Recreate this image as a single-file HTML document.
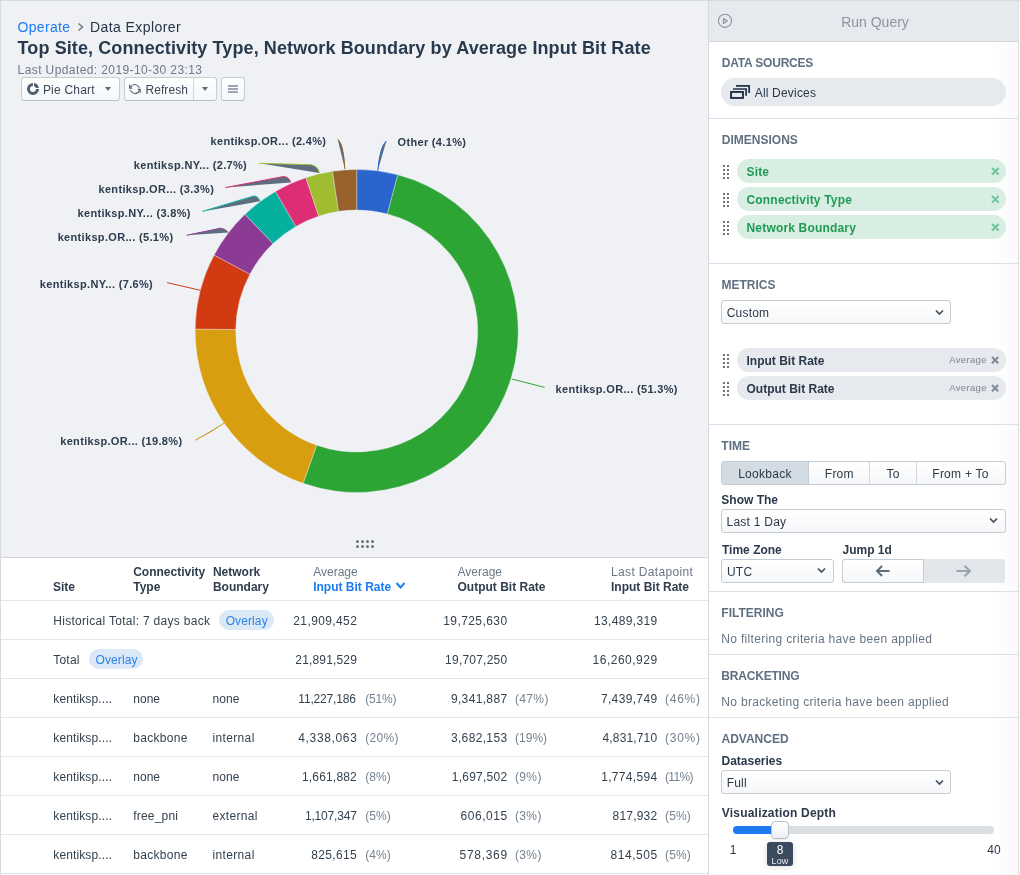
<!DOCTYPE html>
<html><head><meta charset="utf-8"><title>Data Explorer</title>
<style>
html,body{margin:0;padding:0}
body{width:1020px;height:875px;overflow:hidden;position:relative;background:#eff1f5;font-family:"Liberation Sans", sans-serif;-webkit-font-smoothing:antialiased;will-change:transform}
.t{position:absolute;white-space:nowrap}
.b{position:absolute}
svg text{font-family:"Liberation Sans", sans-serif}
</style></head><body>
<div class="b" style="left:0px;top:0px;width:1020px;height:1px;background:#d7dadf"></div>
<div class="b" style="left:0px;top:0px;width:1px;height:875px;background:#d7dadf"></div>
<div class="t" style="top:19.95px;font-size:14px;line-height:14px;font-weight:400;color:#1d7cf2;letter-spacing:0.3px;left:17.60px;">Operate</div>
<svg class="b" style="left:76px;top:21px" width="10" height="12"><polyline points="2.5,2.5 6.5,6 2.5,9.5" fill="none" stroke="#6b7886" stroke-width="1.5"/></svg>
<div class="t" style="top:19.95px;font-size:14px;line-height:14px;font-weight:400;color:#26364a;letter-spacing:0.42px;left:90.00px;">Data Explorer</div>
<div class="t" style="top:38.56px;font-size:18px;line-height:18px;font-weight:700;color:#283a4e;letter-spacing:0.1px;left:17.60px;">Top Site, Connectivity Type, Network Boundary by Average Input Bit Rate</div>
<div class="t" style="top:63.74px;font-size:12px;line-height:12px;font-weight:400;color:#6c7a89;letter-spacing:0.4px;left:17.60px;">Last Updated: 2019-10-30 23:13</div>
<div class="b" style="left:21px;top:77px;width:99px;height:24px;border:1px solid #c8cdd4;border-bottom-color:#b9bfc7;border-radius:3px;background:linear-gradient(#ffffff,#f4f6f8);box-sizing:border-box;"></div>
<svg class="b" style="left:26px;top:82px" width="14" height="14" viewBox="0 0 14 14"><path d="M7 1 A6 6 0 1 0 13 7 L10 7 A3 3 0 1 1 7 4 Z" fill="#506072"/><path d="M8 1.1 A6 6 0 0 1 12.9 6 L10 6 A3 3 0 0 0 8 4.2 Z" fill="#506072"/></svg>
<div class="t" style="top:83.64px;font-size:12px;line-height:12px;font-weight:400;color:#3a4858;letter-spacing:0.22px;left:42.90px;">Pie Chart</div>
<svg class="b" style="left:104px;top:86px" width="8" height="6"><polygon points="1,1 7,1 4,5" fill="#5d6a78"/></svg>
<div class="b" style="left:124px;top:77px;width:93px;height:24px;border:1px solid #c8cdd4;border-bottom-color:#b9bfc7;border-radius:3px;background:linear-gradient(#ffffff,#f4f6f8);box-sizing:border-box;"></div>
<div class="b" style="left:193px;top:78px;width:1px;height:22px;background:#d3d7dd"></div>
<svg class="b" style="left:127px;top:81px" width="16" height="16"><path d="M3.3 6 Q8 0.8 12.6 6.6" fill="none" stroke="#5c6a79" stroke-width="1.15"/><path d="M3 9 Q7.6 15.6 12.6 10" fill="none" stroke="#5c6a79" stroke-width="1.15"/><path d="M2 2.8 L2 7.8 L5.5 7.8 Z" fill="#5c6a79"/><path d="M13.8 7.8 L13.8 12.6 L10.3 7.8 Z" fill="#5c6a79"/></svg>
<div class="t" style="top:83.64px;font-size:12px;line-height:12px;font-weight:400;color:#3a4858;letter-spacing:0.1px;left:145.40px;">Refresh</div>
<svg class="b" style="left:201px;top:86px" width="8" height="6"><polygon points="1,1 7,1 4,5" fill="#5d6a78"/></svg>
<div class="b" style="left:221px;top:77px;width:24px;height:24px;border:1px solid #c8cdd4;border-bottom-color:#b9bfc7;border-radius:3px;background:linear-gradient(#ffffff,#f4f6f8);box-sizing:border-box;"></div>
<div class="b" style="left:228px;top:85px;width:10px;height:2px;background:#9ba6b2"></div>
<div class="b" style="left:228px;top:88px;width:10px;height:2px;background:#9ba6b2"></div>
<div class="b" style="left:228px;top:91px;width:10px;height:2px;background:#9ba6b2"></div>
<svg class="b" style="left:0;top:0" width="708" height="557"><path d="M356.70 169.50 A161.5 161.5 0 0 1 397.77 174.81 L387.47 213.98 A121.0 121.0 0 0 0 356.70 210.00 Z" fill="#2965cc" stroke="#eff1f5" stroke-width="0.35" stroke-linejoin="round"/><path d="M397.77 174.81 A161.5 161.5 0 1 1 303.16 483.37 L316.59 445.16 A121.0 121.0 0 1 0 387.47 213.98 Z" fill="#2ca535" stroke="#eff1f5" stroke-width="0.35" stroke-linejoin="round"/><path d="M303.16 483.37 A161.5 161.5 0 0 1 195.21 329.03 L235.71 329.52 A121.0 121.0 0 0 0 316.59 445.16 Z" fill="#d99e10" stroke="#eff1f5" stroke-width="0.35" stroke-linejoin="round"/><path d="M195.21 329.03 A161.5 161.5 0 0 1 214.14 255.11 L249.89 274.14 A121.0 121.0 0 0 0 235.71 329.52 Z" fill="#d23a12" stroke="#eff1f5" stroke-width="0.35" stroke-linejoin="round"/><path d="M214.14 255.11 A161.5 161.5 0 0 1 245.00 214.36 L273.01 243.61 A121.0 121.0 0 0 0 249.89 274.14 Z" fill="#8b3b93" stroke="#eff1f5" stroke-width="0.35" stroke-linejoin="round"/><path d="M245.00 214.36 A161.5 161.5 0 0 1 275.50 191.40 L295.86 226.41 A121.0 121.0 0 0 0 273.01 243.61 Z" fill="#06b09e" stroke="#eff1f5" stroke-width="0.35" stroke-linejoin="round"/><path d="M275.50 191.40 A161.5 161.5 0 0 1 305.92 177.69 L318.65 216.14 A121.0 121.0 0 0 0 295.86 226.41 Z" fill="#dd2d74" stroke="#eff1f5" stroke-width="0.35" stroke-linejoin="round"/><path d="M305.92 177.69 A161.5 161.5 0 0 1 332.48 171.33 L338.56 211.37 A121.0 121.0 0 0 0 318.65 216.14 Z" fill="#a0bd31" stroke="#eff1f5" stroke-width="0.35" stroke-linejoin="round"/><path d="M332.48 171.33 A161.5 161.5 0 0 1 356.70 169.50 L356.70 210.00 A121.0 121.0 0 0 0 338.56 211.37 Z" fill="#97622c" stroke="#eff1f5" stroke-width="0.35" stroke-linejoin="round"/><path d="M337.7 139.3 Q343.5 143 344.9 169" fill="#5d6d7e" stroke="#97622c" stroke-width="1"/><path d="M386.4 141 Q380 146 377.8 170.5" fill="#5d6d7e" stroke="#2965cc" stroke-width="1"/><path d="M259.4 163.3 L311 164.7 Q318 166 319.4 172.9" fill="#5d6d7e" stroke="#a0bd31" stroke-width="1"/><path d="M225.3 187.6 L283.5 176.5 Q289 177 290.6 182.4" fill="#5d6d7e" stroke="#dd2d74" stroke-width="1"/><path d="M202.4 211.4 L254.1 195.9 Q258 196 260 201.2" fill="#5d6d7e" stroke="#12b2a0" stroke-width="1"/><path d="M186.5 235.3 L220.6 228.2 Q225 228.5 228.2 232.4" fill="#5d6d7e" stroke="#8b3b93" stroke-width="1"/><path d="M167.1 282.6 L200.3 290.3" fill="#5d6d7e" stroke="#d23a12" stroke-width="1"/><path d="M195 440.3 Q210 433 224.1 423.2" fill="#5d6d7e" stroke="#d99e10" stroke-width="1"/><path d="M511.8 379 L544.7 387.4" fill="#5d6d7e" stroke="#2ca535" stroke-width="1"/><text x="326.3" y="145.4" text-anchor="end" font-size="11" font-weight="700" fill="#2d3c4e" letter-spacing="0.33">kentiksp.OR... (2.4%)</text><text x="397.5" y="145.9" text-anchor="start" font-size="11" font-weight="700" fill="#2d3c4e" letter-spacing="0.33">Other (4.1%)</text><text x="247.1" y="169.2" text-anchor="end" font-size="11" font-weight="700" fill="#2d3c4e" letter-spacing="0.33">kentiksp.NY... (2.7%)</text><text x="214.2" y="193.3" text-anchor="end" font-size="11" font-weight="700" fill="#2d3c4e" letter-spacing="0.33">kentiksp.OR... (3.3%)</text><text x="190.8" y="217.2" text-anchor="end" font-size="11" font-weight="700" fill="#2d3c4e" letter-spacing="0.33">kentiksp.NY... (3.8%)</text><text x="173.4" y="241.1" text-anchor="end" font-size="11" font-weight="700" fill="#2d3c4e" letter-spacing="0.33">kentiksp.OR... (5.1%)</text><text x="153.1" y="288.0" text-anchor="end" font-size="11" font-weight="700" fill="#2d3c4e" letter-spacing="0.33">kentiksp.NY... (7.6%)</text><text x="182.4" y="445.1" text-anchor="end" font-size="11" font-weight="700" fill="#2d3c4e" letter-spacing="0.33">kentiksp.OR... (19.8%)</text><text x="555.6" y="392.9" text-anchor="start" font-size="11" font-weight="700" fill="#2d3c4e" letter-spacing="0.33">kentiksp.OR... (51.3%)</text><circle cx="357.5" cy="541.5" r="1.5" fill="#707478"/><circle cx="357.5" cy="546.5" r="1.5" fill="#707478"/><circle cx="362.5" cy="541.5" r="1.5" fill="#707478"/><circle cx="362.5" cy="546.5" r="1.5" fill="#707478"/><circle cx="367.5" cy="541.5" r="1.5" fill="#707478"/><circle cx="367.5" cy="546.5" r="1.5" fill="#707478"/><circle cx="372.5" cy="541.5" r="1.5" fill="#707478"/><circle cx="372.5" cy="546.5" r="1.5" fill="#707478"/></svg>
<div class="b" style="left:1px;top:557px;width:707px;height:1px;background:#d3d6db"></div>
<div class="b" style="left:1px;top:558px;width:707px;height:317px;background:#ffffff"></div>
<div class="b" style="left:1px;top:600px;width:707px;height:1px;background:#e2e5e9"></div>
<div class="b" style="left:1px;top:639px;width:707px;height:1px;background:#e2e5e9"></div>
<div class="b" style="left:1px;top:678px;width:707px;height:1px;background:#e2e5e9"></div>
<div class="b" style="left:1px;top:717px;width:707px;height:1px;background:#e2e5e9"></div>
<div class="b" style="left:1px;top:756px;width:707px;height:1px;background:#e2e5e9"></div>
<div class="b" style="left:1px;top:795px;width:707px;height:1px;background:#e2e5e9"></div>
<div class="b" style="left:1px;top:834px;width:707px;height:1px;background:#e2e5e9"></div>
<div class="b" style="left:1px;top:873px;width:707px;height:1px;background:#e2e5e9"></div>
<div class="t" style="top:580.84px;font-size:12px;line-height:12px;font-weight:700;color:#2f3e4f;left:53.00px;">Site</div>
<div class="t" style="top:566.04px;font-size:12px;line-height:12px;font-weight:700;color:#2f3e4f;left:133.20px;">Connectivity</div>
<div class="t" style="top:580.84px;font-size:12px;line-height:12px;font-weight:700;color:#2f3e4f;left:133.20px;">Type</div>
<div class="t" style="top:566.04px;font-size:12px;line-height:12px;font-weight:700;color:#2f3e4f;left:212.90px;">Network</div>
<div class="t" style="top:580.84px;font-size:12px;line-height:12px;font-weight:700;color:#2f3e4f;left:212.90px;">Boundary</div>
<div class="t" style="top:566.04px;font-size:12px;line-height:12px;font-weight:400;color:#6b7785;left:313.20px;">Average</div>
<div class="t" style="top:580.84px;font-size:12px;line-height:12px;font-weight:700;color:#1d7cf2;left:313.20px;">Input Bit Rate</div>
<svg class="b" style="left:395px;top:581px" width="12" height="9"><polyline points="1.5,2 5.5,6.5 9.5,2" fill="none" stroke="#1d7cf2" stroke-width="2"/></svg>
<div class="t" style="top:566.04px;font-size:12px;line-height:12px;font-weight:400;color:#6b7785;left:457.50px;">Average</div>
<div class="t" style="top:580.84px;font-size:12px;line-height:12px;font-weight:700;color:#2f3e4f;left:457.50px;">Output Bit Rate</div>
<div class="t" style="top:566.04px;font-size:12px;line-height:12px;font-weight:400;color:#6b7785;letter-spacing:0.35px;left:611.00px;">Last Datapoint</div>
<div class="t" style="top:580.84px;font-size:12px;line-height:12px;font-weight:700;color:#2f3e4f;left:611.00px;">Input Bit Rate</div>
<div class="t" style="top:614.74px;font-size:12px;line-height:12px;font-weight:400;color:#34424f;letter-spacing:0.29px;left:53.30px;">Historical Total: 7 days back</div>
<div class="t" style="top:614.74px;font-size:12px;line-height:12px;font-weight:400;color:#34424f;letter-spacing:0.384px;left:293.30px;">21,909,452</div>
<div class="t" style="top:614.74px;font-size:12px;line-height:12px;font-weight:400;color:#34424f;letter-spacing:0.428px;left:443.20px;">19,725,630</div>
<div class="t" style="top:614.74px;font-size:12px;line-height:12px;font-weight:400;color:#34424f;letter-spacing:0.328px;left:594.10px;">13,489,319</div>
<div class="t" style="top:653.74px;font-size:12px;line-height:12px;font-weight:400;color:#34424f;letter-spacing:0.2px;left:53.30px;">Total</div>
<div class="t" style="top:653.74px;font-size:12px;line-height:12px;font-weight:400;color:#34424f;letter-spacing:0.161px;left:295.30px;">21,891,529</div>
<div class="t" style="top:653.74px;font-size:12px;line-height:12px;font-weight:400;color:#34424f;letter-spacing:0.217px;left:445.10px;">19,707,250</div>
<div class="t" style="top:653.74px;font-size:12px;line-height:12px;font-weight:400;color:#34424f;letter-spacing:0.495px;left:592.60px;">16,260,929</div>
<div class="t" style="top:692.74px;font-size:12px;line-height:12px;font-weight:400;color:#34424f;letter-spacing:0.12px;left:53.30px;">kentiksp....</div>
<div class="t" style="top:692.74px;font-size:12px;line-height:12px;font-weight:400;color:#34424f;letter-spacing:0.05px;left:133.20px;">none</div>
<div class="t" style="top:692.74px;font-size:12px;line-height:12px;font-weight:400;color:#34424f;letter-spacing:0.05px;left:212.50px;">none</div>
<div class="t" style="top:692.74px;font-size:12px;line-height:12px;font-weight:400;color:#34424f;letter-spacing:-0.172px;left:298.30px;">11,227,186</div>
<div class="t" style="top:692.74px;font-size:12px;line-height:12px;font-weight:400;color:#75828f;letter-spacing:-0.201px;left:365.20px;">(51%)</div>
<div class="t" style="top:692.74px;font-size:12px;line-height:12px;font-weight:400;color:#34424f;letter-spacing:0.353px;left:450.90px;">9,341,887</div>
<div class="t" style="top:692.74px;font-size:12px;line-height:12px;font-weight:400;color:#75828f;letter-spacing:0.374px;left:514.90px;">(47%)</div>
<div class="t" style="top:692.74px;font-size:12px;line-height:12px;font-weight:400;color:#34424f;letter-spacing:0.353px;left:600.90px;">7,439,749</div>
<div class="t" style="top:692.74px;font-size:12px;line-height:12px;font-weight:400;color:#75828f;letter-spacing:0.749px;left:665.00px;">(46%)</div>
<div class="t" style="top:731.74px;font-size:12px;line-height:12px;font-weight:400;color:#34424f;letter-spacing:0.12px;left:53.30px;">kentiksp....</div>
<div class="t" style="top:731.74px;font-size:12px;line-height:12px;font-weight:400;color:#34424f;letter-spacing:0.3px;left:133.20px;">backbone</div>
<div class="t" style="top:731.74px;font-size:12px;line-height:12px;font-weight:400;color:#34424f;letter-spacing:0.35px;left:212.50px;">internal</div>
<div class="t" style="top:731.74px;font-size:12px;line-height:12px;font-weight:400;color:#34424f;letter-spacing:0.64px;left:298.30px;">4,338,063</div>
<div class="t" style="top:731.74px;font-size:12px;line-height:12px;font-weight:400;color:#75828f;letter-spacing:0.299px;left:365.20px;">(20%)</div>
<div class="t" style="top:731.74px;font-size:12px;line-height:12px;font-weight:400;color:#34424f;letter-spacing:0.353px;left:450.90px;">3,682,153</div>
<div class="t" style="top:731.74px;font-size:12px;line-height:12px;font-weight:400;color:#75828f;letter-spacing:0.049px;left:514.90px;">(19%)</div>
<div class="t" style="top:731.74px;font-size:12px;line-height:12px;font-weight:400;color:#34424f;letter-spacing:0.153px;left:602.50px;">4,831,710</div>
<div class="t" style="top:731.74px;font-size:12px;line-height:12px;font-weight:400;color:#75828f;letter-spacing:0.749px;left:665.00px;">(30%)</div>
<div class="t" style="top:770.74px;font-size:12px;line-height:12px;font-weight:400;color:#34424f;letter-spacing:0.12px;left:53.30px;">kentiksp....</div>
<div class="t" style="top:770.74px;font-size:12px;line-height:12px;font-weight:400;color:#34424f;letter-spacing:0.05px;left:133.20px;">none</div>
<div class="t" style="top:770.74px;font-size:12px;line-height:12px;font-weight:400;color:#34424f;letter-spacing:0.05px;left:212.50px;">none</div>
<div class="t" style="top:770.74px;font-size:12px;line-height:12px;font-weight:400;color:#34424f;letter-spacing:0.19px;left:301.90px;">1,661,882</div>
<div class="t" style="top:770.74px;font-size:12px;line-height:12px;font-weight:400;color:#75828f;letter-spacing:0.089px;left:365.20px;">(8%)</div>
<div class="t" style="top:770.74px;font-size:12px;line-height:12px;font-weight:400;color:#34424f;letter-spacing:0.24px;left:451.80px;">1,697,502</div>
<div class="t" style="top:770.74px;font-size:12px;line-height:12px;font-weight:400;color:#75828f;letter-spacing:0.389px;left:514.90px;">(9%)</div>
<div class="t" style="top:770.74px;font-size:12px;line-height:12px;font-weight:400;color:#34424f;letter-spacing:0.315px;left:601.20px;">1,774,594</div>
<div class="t" style="top:770.74px;font-size:12px;line-height:12px;font-weight:400;color:#75828f;letter-spacing:-0.651px;left:665.00px;">(11%)</div>
<div class="t" style="top:809.74px;font-size:12px;line-height:12px;font-weight:400;color:#34424f;letter-spacing:0.12px;left:53.30px;">kentiksp....</div>
<div class="t" style="top:809.74px;font-size:12px;line-height:12px;font-weight:400;color:#34424f;letter-spacing:0.2px;left:133.20px;">free_pni</div>
<div class="t" style="top:809.74px;font-size:12px;line-height:12px;font-weight:400;color:#34424f;letter-spacing:0.3px;left:212.50px;">external</div>
<div class="t" style="top:809.74px;font-size:12px;line-height:12px;font-weight:400;color:#34424f;letter-spacing:-0.197px;left:305.00px;">1,107,347</div>
<div class="t" style="top:809.74px;font-size:12px;line-height:12px;font-weight:400;color:#75828f;letter-spacing:0.089px;left:365.20px;">(5%)</div>
<div class="t" style="top:809.74px;font-size:12px;line-height:12px;font-weight:400;color:#34424f;letter-spacing:0.539px;left:460.50px;">606,015</div>
<div class="t" style="top:809.74px;font-size:12px;line-height:12px;font-weight:400;color:#75828f;letter-spacing:0.389px;left:514.90px;">(3%)</div>
<div class="t" style="top:809.74px;font-size:12px;line-height:12px;font-weight:400;color:#34424f;letter-spacing:0.189px;left:612.60px;">817,932</div>
<div class="t" style="top:809.74px;font-size:12px;line-height:12px;font-weight:400;color:#75828f;letter-spacing:0.156px;left:665.00px;">(5%)</div>
<div class="t" style="top:848.74px;font-size:12px;line-height:12px;font-weight:400;color:#34424f;letter-spacing:0.12px;left:53.30px;">kentiksp....</div>
<div class="t" style="top:848.74px;font-size:12px;line-height:12px;font-weight:400;color:#34424f;letter-spacing:0.3px;left:133.20px;">backbone</div>
<div class="t" style="top:848.74px;font-size:12px;line-height:12px;font-weight:400;color:#34424f;letter-spacing:0.35px;left:212.50px;">internal</div>
<div class="t" style="top:848.74px;font-size:12px;line-height:12px;font-weight:400;color:#34424f;letter-spacing:0.372px;left:311.20px;">825,615</div>
<div class="t" style="top:848.74px;font-size:12px;line-height:12px;font-weight:400;color:#75828f;letter-spacing:0.089px;left:365.20px;">(4%)</div>
<div class="t" style="top:848.74px;font-size:12px;line-height:12px;font-weight:400;color:#34424f;letter-spacing:0.705px;left:459.50px;">578,369</div>
<div class="t" style="top:848.74px;font-size:12px;line-height:12px;font-weight:400;color:#75828f;letter-spacing:0.389px;left:514.90px;">(3%)</div>
<div class="t" style="top:848.74px;font-size:12px;line-height:12px;font-weight:400;color:#34424f;letter-spacing:0.539px;left:610.50px;">814,505</div>
<div class="t" style="top:848.74px;font-size:12px;line-height:12px;font-weight:400;color:#75828f;letter-spacing:0.156px;left:665.00px;">(5%)</div>
<div class="b" style="left:219px;top:610px;width:55px;height:20px;background:#dbe8f6;border-radius:10px"></div>
<div class="t" style="top:614.74px;font-size:12px;line-height:12px;font-weight:400;color:#2d82ea;letter-spacing:0.1px;left:225.70px;">Overlay</div>
<div class="b" style="left:89px;top:649px;width:54px;height:20px;background:#dbe8f6;border-radius:10px"></div>
<div class="t" style="top:653.74px;font-size:12px;line-height:12px;font-weight:400;color:#2d82ea;letter-spacing:0.1px;left:95.50px;">Overlay</div>
<div class="b" style="left:708px;top:1px;width:1px;height:874px;background:#d5d8dc"></div>
<div class="b" style="left:709px;top:1px;width:309px;height:874px;background:#ffffff"></div>
<div class="b" style="left:995px;top:42px;width:23px;height:833px;background:linear-gradient(90deg,rgba(0,0,0,0),rgba(0,0,0,0.025))"></div>
<div class="b" style="left:1018px;top:1px;width:1px;height:874px;background:#dfe2e5"></div>
<div class="b" style="left:1019px;top:1px;width:1px;height:874px;background:#f7f8f9"></div>
<div class="b" style="left:709px;top:1px;width:309px;height:40px;background:#e6e9ed"></div>
<div class="b" style="left:709px;top:41px;width:309px;height:1px;background:#d3d7dc"></div>
<svg class="b" style="left:716px;top:12px" width="18" height="18"><circle cx="9" cy="8.8" r="6.6" fill="none" stroke="#8893a0" stroke-width="1.1"/><polygon points="7.5,6.5 11.3,9 7.5,11.5" fill="none" stroke="#8893a0" stroke-width="1.1" stroke-linejoin="round"/></svg>
<div class="t" style="top:14.85px;font-size:14px;line-height:14px;font-weight:400;color:#8a95a2;left:575.00px;width:600px;text-align:center;">Run Query</div>
<div class="b" style="left:709px;top:118px;width:309px;height:1px;background:#dde1e5"></div>
<div class="b" style="left:709px;top:263px;width:309px;height:1px;background:#dde1e5"></div>
<div class="b" style="left:709px;top:424px;width:309px;height:1px;background:#dde1e5"></div>
<div class="b" style="left:709px;top:591px;width:309px;height:1px;background:#dde1e5"></div>
<div class="b" style="left:709px;top:654px;width:309px;height:1px;background:#dde1e5"></div>
<div class="b" style="left:709px;top:717px;width:309px;height:1px;background:#dde1e5"></div>
<div class="t" style="top:56.84px;font-size:12px;line-height:12px;font-weight:700;color:#607082;letter-spacing:-0.2px;left:721.80px;">DATA SOURCES</div>
<div class="b" style="left:721px;top:78px;width:285px;height:28px;background:#e6e9ed;border-radius:14px"></div>
<svg class="b" style="left:729px;top:84px" width="23" height="16"><rect x="2.05" y="7.95" width="11.9" height="6" fill="none" stroke="#1f2f44" stroke-width="1.9"/><polyline points="4,5 17.1,5 17.1,11.8" fill="none" stroke="#1f2f44" stroke-width="1.7"/><polyline points="7,1.9 20.15,1.9 20.15,8.9" fill="none" stroke="#1f2f44" stroke-width="1.7"/></svg>
<div class="t" style="top:86.84px;font-size:12px;line-height:12px;font-weight:400;color:#2b3a4b;letter-spacing:0.19px;left:754.70px;">All Devices</div>
<div class="t" style="top:133.64px;font-size:12px;line-height:12px;font-weight:700;color:#607082;left:721.80px;">DIMENSIONS</div>
<div class="b" style="left:723px;top:165px;width:2px;height:2px;background:#66737f"></div><div class="b" style="left:723px;top:169px;width:2px;height:2px;background:#66737f"></div><div class="b" style="left:723px;top:173px;width:2px;height:2px;background:#66737f"></div><div class="b" style="left:723px;top:177px;width:2px;height:2px;background:#66737f"></div><div class="b" style="left:727px;top:165px;width:2px;height:2px;background:#66737f"></div><div class="b" style="left:727px;top:169px;width:2px;height:2px;background:#66737f"></div><div class="b" style="left:727px;top:173px;width:2px;height:2px;background:#66737f"></div><div class="b" style="left:727px;top:177px;width:2px;height:2px;background:#66737f"></div>
<div class="b" style="left:737px;top:159px;width:269px;height:24px;background:#d9eee3;border-radius:12px"></div>
<div class="t" style="top:165.64px;font-size:12px;line-height:12px;font-weight:700;color:#1e9b55;letter-spacing:0.18px;left:746.50px;">Site</div>
<svg class="b" style="left:990.6px;top:166.6px" width="12" height="12"><path d="M1 1 L7.6 7.6 M7.6 1 L1 7.6" stroke="#6cc59a" stroke-width="2"/></svg>
<div class="b" style="left:723px;top:193px;width:2px;height:2px;background:#66737f"></div><div class="b" style="left:723px;top:197px;width:2px;height:2px;background:#66737f"></div><div class="b" style="left:723px;top:201px;width:2px;height:2px;background:#66737f"></div><div class="b" style="left:723px;top:205px;width:2px;height:2px;background:#66737f"></div><div class="b" style="left:727px;top:193px;width:2px;height:2px;background:#66737f"></div><div class="b" style="left:727px;top:197px;width:2px;height:2px;background:#66737f"></div><div class="b" style="left:727px;top:201px;width:2px;height:2px;background:#66737f"></div><div class="b" style="left:727px;top:205px;width:2px;height:2px;background:#66737f"></div>
<div class="b" style="left:737px;top:187px;width:269px;height:24px;background:#d9eee3;border-radius:12px"></div>
<div class="t" style="top:193.64px;font-size:12px;line-height:12px;font-weight:700;color:#1e9b55;letter-spacing:0.18px;left:746.50px;">Connectivity Type</div>
<svg class="b" style="left:990.6px;top:194.6px" width="12" height="12"><path d="M1 1 L7.6 7.6 M7.6 1 L1 7.6" stroke="#6cc59a" stroke-width="2"/></svg>
<div class="b" style="left:723px;top:221px;width:2px;height:2px;background:#66737f"></div><div class="b" style="left:723px;top:225px;width:2px;height:2px;background:#66737f"></div><div class="b" style="left:723px;top:229px;width:2px;height:2px;background:#66737f"></div><div class="b" style="left:723px;top:233px;width:2px;height:2px;background:#66737f"></div><div class="b" style="left:727px;top:221px;width:2px;height:2px;background:#66737f"></div><div class="b" style="left:727px;top:225px;width:2px;height:2px;background:#66737f"></div><div class="b" style="left:727px;top:229px;width:2px;height:2px;background:#66737f"></div><div class="b" style="left:727px;top:233px;width:2px;height:2px;background:#66737f"></div>
<div class="b" style="left:737px;top:215px;width:269px;height:24px;background:#d9eee3;border-radius:12px"></div>
<div class="t" style="top:221.64px;font-size:12px;line-height:12px;font-weight:700;color:#1e9b55;letter-spacing:0.18px;left:746.50px;">Network Boundary</div>
<svg class="b" style="left:990.6px;top:222.6px" width="12" height="12"><path d="M1 1 L7.6 7.6 M7.6 1 L1 7.6" stroke="#6cc59a" stroke-width="2"/></svg>
<div class="t" style="top:279.14px;font-size:12px;line-height:12px;font-weight:700;color:#607082;left:721.50px;">METRICS</div>
<div class="b" style="left:721px;top:300px;width:230px;height:24px;border:1px solid #c6ccd3;border-radius:3px;background:linear-gradient(#ffffff,#f6f7f9);box-sizing:border-box;"></div>
<div class="t" style="top:307.34px;font-size:12px;line-height:12px;font-weight:400;color:#2b3a4b;letter-spacing:0.2px;left:726.70px;">Custom</div>
<svg class="b" style="left:934.5px;top:308.5px" width="10" height="8"><polyline points="1,1.5 4.5,5 8,1.5" fill="none" stroke="#44515f" stroke-width="1.7"/></svg>
<div class="b" style="left:723px;top:354px;width:2px;height:2px;background:#66737f"></div><div class="b" style="left:723px;top:358px;width:2px;height:2px;background:#66737f"></div><div class="b" style="left:723px;top:362px;width:2px;height:2px;background:#66737f"></div><div class="b" style="left:723px;top:366px;width:2px;height:2px;background:#66737f"></div><div class="b" style="left:727px;top:354px;width:2px;height:2px;background:#66737f"></div><div class="b" style="left:727px;top:358px;width:2px;height:2px;background:#66737f"></div><div class="b" style="left:727px;top:362px;width:2px;height:2px;background:#66737f"></div><div class="b" style="left:727px;top:366px;width:2px;height:2px;background:#66737f"></div>
<div class="b" style="left:737px;top:348px;width:269px;height:24px;background:#e6e9ed;border-radius:12px"></div>
<div class="t" style="top:354.84px;font-size:12px;line-height:12px;font-weight:700;color:#2b3a4b;left:746.50px;">Input Bit Rate</div>
<div class="t" style="top:355.27px;font-size:9.6px;line-height:9.6px;font-weight:400;color:#7a8795;letter-spacing:0.3px;left:386.80px;width:600px;text-align:right;">Average</div>
<svg class="b" style="left:991px;top:355.6px" width="12" height="12"><path d="M1 1 L7.199999999999999 7.199999999999999 M7.199999999999999 1 L1 7.199999999999999" stroke="#7f8b97" stroke-width="2.1"/></svg>
<div class="b" style="left:723px;top:382px;width:2px;height:2px;background:#66737f"></div><div class="b" style="left:723px;top:386px;width:2px;height:2px;background:#66737f"></div><div class="b" style="left:723px;top:390px;width:2px;height:2px;background:#66737f"></div><div class="b" style="left:723px;top:394px;width:2px;height:2px;background:#66737f"></div><div class="b" style="left:727px;top:382px;width:2px;height:2px;background:#66737f"></div><div class="b" style="left:727px;top:386px;width:2px;height:2px;background:#66737f"></div><div class="b" style="left:727px;top:390px;width:2px;height:2px;background:#66737f"></div><div class="b" style="left:727px;top:394px;width:2px;height:2px;background:#66737f"></div>
<div class="b" style="left:737px;top:376px;width:269px;height:24px;background:#e6e9ed;border-radius:12px"></div>
<div class="t" style="top:382.84px;font-size:12px;line-height:12px;font-weight:700;color:#2b3a4b;left:746.50px;">Output Bit Rate</div>
<div class="t" style="top:383.27px;font-size:9.6px;line-height:9.6px;font-weight:400;color:#7a8795;letter-spacing:0.3px;left:386.80px;width:600px;text-align:right;">Average</div>
<svg class="b" style="left:991px;top:383.6px" width="12" height="12"><path d="M1 1 L7.199999999999999 7.199999999999999 M7.199999999999999 1 L1 7.199999999999999" stroke="#7f8b97" stroke-width="2.1"/></svg>
<div class="t" style="top:439.64px;font-size:12px;line-height:12px;font-weight:700;color:#607082;left:721.30px;">TIME</div>
<div class="b" style="left:721px;top:461px;width:285px;height:24px;border:1px solid #c6ccd3;border-radius:3px;background:linear-gradient(#ffffff,#f6f7f9);box-sizing:border-box;"></div>
<div class="b" style="left:722px;top:462px;width:87px;height:22px;background:#d3dbe3;border-radius:2px 0 0 2px"></div>
<div class="b" style="left:808px;top:462px;width:1px;height:22px;background:#c6ccd3"></div>
<div class="b" style="left:869px;top:462px;width:1px;height:22px;background:#d3d8de"></div>
<div class="b" style="left:916px;top:462px;width:1px;height:22px;background:#d3d8de"></div>
<div class="t" style="top:467.84px;font-size:12px;line-height:12px;font-weight:400;color:#2b3a4b;letter-spacing:0.29px;left:465.00px;width:600px;text-align:center;">Lookback</div>
<div class="t" style="top:467.84px;font-size:12px;line-height:12px;font-weight:400;color:#2b3a4b;letter-spacing:0.25px;left:539.30px;width:600px;text-align:center;">From</div>
<div class="t" style="top:467.84px;font-size:12px;line-height:12px;font-weight:400;color:#2b3a4b;letter-spacing:0.25px;left:593.10px;width:600px;text-align:center;">To</div>
<div class="t" style="top:467.84px;font-size:12px;line-height:12px;font-weight:400;color:#2b3a4b;letter-spacing:0.25px;left:660.50px;width:600px;text-align:center;">From + To</div>
<div class="t" style="top:493.74px;font-size:12px;line-height:12px;font-weight:700;color:#2b3a4b;left:721.30px;">Show The</div>
<div class="b" style="left:721px;top:509px;width:285px;height:24px;border:1px solid #c6ccd3;border-radius:3px;background:linear-gradient(#ffffff,#f6f7f9);box-sizing:border-box;"></div>
<div class="t" style="top:516.24px;font-size:12px;line-height:12px;font-weight:400;color:#2b3a4b;letter-spacing:0.25px;left:726.50px;">Last 1 Day</div>
<svg class="b" style="left:989px;top:516.5px" width="10" height="8"><polyline points="1,1.5 4.5,5 8,1.5" fill="none" stroke="#44515f" stroke-width="1.7"/></svg>
<div class="t" style="top:543.84px;font-size:12px;line-height:12px;font-weight:700;color:#2b3a4b;left:722.00px;">Time Zone</div>
<div class="b" style="left:721px;top:559px;width:113px;height:24px;border:1px solid #c6ccd3;border-radius:3px;background:linear-gradient(#ffffff,#f6f7f9);box-sizing:border-box;"></div>
<div class="t" style="top:565.54px;font-size:12px;line-height:12px;font-weight:400;color:#2b3a4b;letter-spacing:0.2px;left:727.00px;">UTC</div>
<svg class="b" style="left:817px;top:567px" width="10" height="8"><polyline points="1,1.5 4.5,5 8,1.5" fill="none" stroke="#44515f" stroke-width="1.7"/></svg>
<div class="t" style="top:543.84px;font-size:12px;line-height:12px;font-weight:700;color:#2b3a4b;left:842.50px;">Jump 1d</div>
<div class="b" style="left:842px;top:559px;width:163px;height:24px;border-radius:3px;background:#e3e7eb"></div>
<div class="b" style="left:842px;top:559px;width:82px;height:24px;border:1px solid #c6ccd3;border-radius:3px;background:linear-gradient(#ffffff,#f6f7f9);box-sizing:border-box;border-radius:3px 0 0 3px"></div>
<svg class="b" style="left:874px;top:564px" width="18" height="14"><path d="M15.5 7 L3 7 M8 2 L3 7 L8 12" fill="none" stroke="#5e6c7b" stroke-width="2"/></svg>
<svg class="b" style="left:955px;top:564px" width="18" height="14"><path d="M1.5 7 L15 7 M9.5 1.8 L15 7 L9.5 12.2" fill="none" stroke="#9aa4ae" stroke-width="2"/></svg>
<div class="t" style="top:607.04px;font-size:12px;line-height:12px;font-weight:700;color:#607082;left:721.30px;">FILTERING</div>
<div class="t" style="top:633.24px;font-size:12px;line-height:12px;font-weight:400;color:#667584;letter-spacing:0.33px;left:721.30px;">No filtering criteria have been applied</div>
<div class="t" style="top:670.14px;font-size:12px;line-height:12px;font-weight:700;color:#607082;letter-spacing:-0.2px;left:721.30px;">BRACKETING</div>
<div class="t" style="top:696.04px;font-size:12px;line-height:12px;font-weight:400;color:#667584;letter-spacing:0.32px;left:721.30px;">No bracketing criteria have been applied</div>
<div class="t" style="top:733.24px;font-size:12px;line-height:12px;font-weight:700;color:#607082;left:721.50px;">ADVANCED</div>
<div class="t" style="top:754.84px;font-size:12px;line-height:12px;font-weight:700;color:#2b3a4b;left:721.50px;">Dataseries</div>
<div class="b" style="left:721px;top:770px;width:230px;height:24px;border:1px solid #c6ccd3;border-radius:3px;background:linear-gradient(#ffffff,#f6f7f9);box-sizing:border-box;"></div>
<div class="t" style="top:776.84px;font-size:12px;line-height:12px;font-weight:400;color:#2b3a4b;letter-spacing:0.2px;left:726.70px;">Full</div>
<svg class="b" style="left:934.5px;top:778.5px" width="10" height="8"><polyline points="1,1.5 4.5,5 8,1.5" fill="none" stroke="#44515f" stroke-width="1.7"/></svg>
<div class="t" style="top:806.84px;font-size:12px;line-height:12px;font-weight:700;color:#2b3a4b;letter-spacing:0.2px;left:721.80px;">Visualization Depth</div>
<div class="b" style="left:733px;top:826px;width:261px;height:8px;background:#d9dee3;border-radius:4px"></div>
<div class="b" style="left:733px;top:826px;width:42px;height:8px;background:#1b7cf2;border-radius:4px 0 0 4px"></div>
<div class="b" style="left:771px;top:821px;width:18px;height:18px;border:1px solid #b9c0c8;border-radius:4px;background:linear-gradient(#ffffff,#eef0f3);box-sizing:border-box;box-shadow:0 1px 1px rgba(0,0,0,0.08)"></div>
<div class="t" style="top:843.74px;font-size:12px;line-height:12px;font-weight:400;color:#2b3a4b;left:433.20px;width:600px;text-align:center;">1</div>
<div class="t" style="top:843.74px;font-size:12px;line-height:12px;font-weight:400;color:#2b3a4b;left:694.00px;width:600px;text-align:center;">40</div>
<div class="b" style="left:767px;top:842px;width:26px;height:24px;background:#3b4a5c;border-radius:3px;box-shadow:0 1px 6px rgba(0,0,0,0.15)"></div>
<div class="t" style="top:844.04px;font-size:12px;line-height:12px;font-weight:400;color:#ffffff;left:480.00px;width:600px;text-align:center;">8</div>
<div class="t" style="top:857.18px;font-size:9px;line-height:9px;font-weight:400;color:#e8ecf0;letter-spacing:0.1px;left:480.00px;width:600px;text-align:center;">Low</div>
</body></html>
